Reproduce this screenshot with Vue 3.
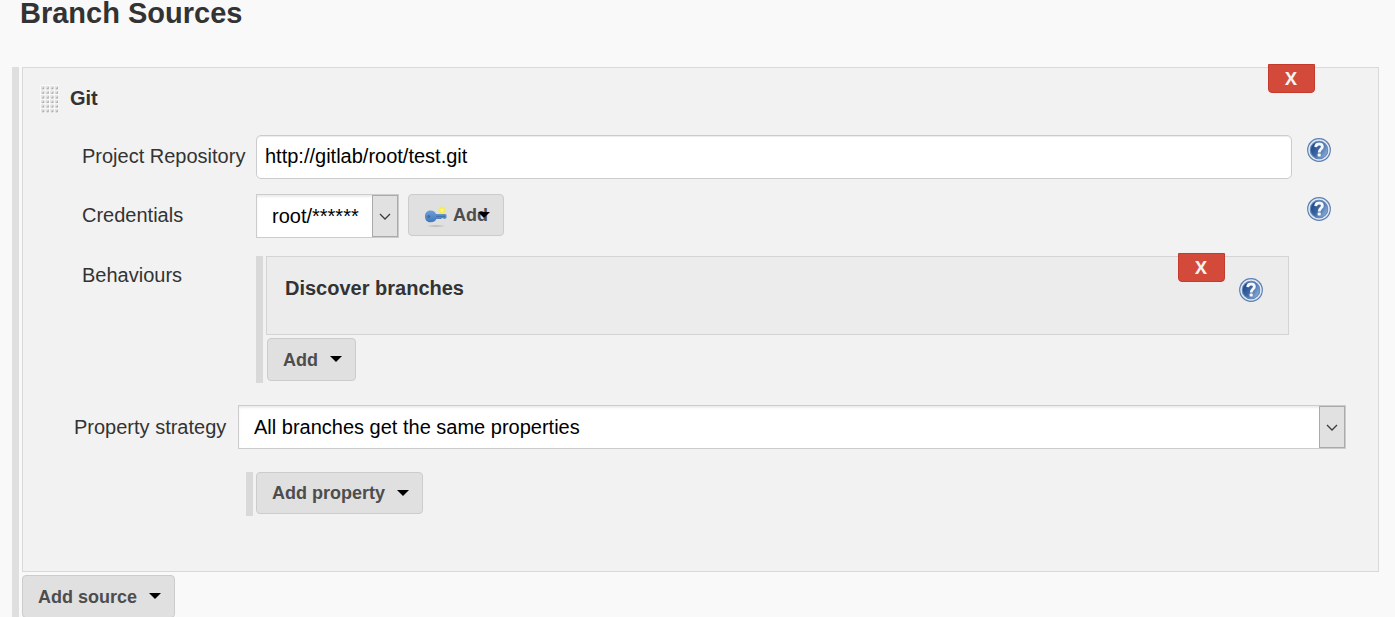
<script setup>
import { ref } from 'vue'

const repository = ref('http://gitlab/root/test.git')
const credential = ref('root/******')
const strategy = ref('All branches get the same properties')

const dots = []
for (let row = 0; row < 6; row++) {
  for (let col = 0; col < 4; col++) {
    dots.push({ x: 1 + col * 4.6, y: 1 + row * 4.6 })
  }
}
</script>

<template>
  <main class="page">
    <svg class="defs" width="0" height="0" aria-hidden="true">
      <defs>
        <linearGradient id="helpFill" x1="0" y1="0.2" x2="1" y2="0.8">
          <stop offset="0" stop-color="#1d4482" />
          <stop offset="0.45" stop-color="#3a65a3" />
          <stop offset="1" stop-color="#93b4dc" />
        </linearGradient>
        <linearGradient id="keyFill" x1="0" y1="0" x2="0" y2="1">
          <stop offset="0" stop-color="#6f9fd6" />
          <stop offset="1" stop-color="#3f78b8" />
        </linearGradient>
        <radialGradient id="glow">
          <stop offset="0" stop-color="#fffbb0" />
          <stop offset="0.5" stop-color="#fbee3c" />
          <stop offset="1" stop-color="#f6e83a" stop-opacity="0.1" />
        </radialGradient>
        <radialGradient id="shade">
          <stop offset="0" stop-color="#b4b4b4" />
          <stop offset="1" stop-color="#e0e0e0" />
        </radialGradient>
        <symbol id="help" viewBox="0 0 24 24">
          <circle cx="12" cy="12" r="11.9" fill="#5a7fb3" />
          <circle cx="12" cy="12" r="10" fill="none" stroke="#dfe8f3" stroke-width="1.5" />
          <circle cx="12" cy="12" r="8.6" fill="url(#helpFill)" stroke="#6b8dbd" stroke-width="0.8" />
          <path d="M8.7 9.1C8.8 6.9 10.3 6 12.1 6C14.1 6 15.4 7.1 15.4 8.7C15.4 11 12.2 11.3 12.2 14.4" fill="none" stroke="#f4f7fb" stroke-width="2.8" />
          <rect x="10.7" y="15.6" width="3" height="3" rx="0.7" fill="#f4f7fb" />
        </symbol>
        <symbol id="caret" viewBox="0 0 12 6">
          <path d="M0 0H12L6 6Z" fill="#000" />
        </symbol>
        <symbol id="chevron" viewBox="0 0 12 7">
          <path d="M1 1L6 6L11 1" fill="none" stroke="#3c3c3c" stroke-width="1.3" />
        </symbol>
      </defs>
    </svg>

    <h1>Branch Sources</h1>

    <section class="sources">
      <div class="panel">
        <button class="remove" type="button" aria-label="Remove Git source">X</button>

        <header class="source-head">
          <svg class="grip" viewBox="0 0 19 28" aria-hidden="true">
            <rect width="19" height="28" fill="#f9f9f9" />
            <g v-for="(dot, i) in dots" :key="i">
              <rect :x="dot.x" :y="dot.y" width="3.4" height="3.4" fill="#e2e2e2" />
              <path :d="`M${dot.x + 3.2} ${dot.y + 0.6}v2.6h-2.6z`" fill="#b0b0b0" />
            </g>
          </svg>
          <h2>Git</h2>
        </header>

        <div class="row">
          <label for="repo">Project Repository</label>
          <input id="repo" v-model="repository" class="text" type="text" />
          <button class="help" type="button" aria-label="Help for Project Repository"><svg><use href="#help" /></svg></button>
        </div>

        <div class="row">
          <label for="cred">Credentials</label>
          <div class="inline">
            <div class="select compact">
              <select id="cred" v-model="credential"><option>root/******</option></select>
              <span class="arrow"><svg><use href="#chevron" /></svg></span>
            </div>
            <button class="btn key-btn" type="button">
              <svg class="key" viewBox="0 0 24 22" aria-hidden="true">
                <ellipse cx="12" cy="20" rx="10" ry="1.6" fill="url(#shade)" />
                <path d="M6.5 4.5C10 4.5 11.6 6.6 12 8H21.5L22.5 9V12L20.5 13L18.5 12L17 13H12.3C11.5 15.3 9.4 16.3 6.5 16.3C2.7 16.3 1 13.8 1 10.5C1 7 3 4.5 6.5 4.5Z" fill="url(#keyFill)" />
                <circle cx="4.8" cy="10.5" r="1.5" fill="#3d6ea8" />
                <path d="M12 10.3H21" stroke="#3f6fa8" stroke-width="1" />
                <circle cx="18" cy="4.2" r="4.2" fill="url(#glow)" />
              </svg>
              <span>Add</span>
              <svg class="caret over"><use href="#caret" /></svg>
            </button>
          </div>
          <button class="help" type="button" aria-label="Help for Credentials"><svg><use href="#help" /></svg></button>
        </div>

        <div class="row behaviours">
          <span class="label">Behaviours</span>
          <div class="stack">
            <div class="trait">
              <button class="remove" type="button" aria-label="Remove Discover branches">X</button>
              <h3>Discover branches</h3>
              <button class="help" type="button" aria-label="Help for Discover branches"><svg><use href="#help" /></svg></button>
            </div>
            <button class="btn" type="button">Add <svg class="caret"><use href="#caret" /></svg></button>
          </div>
        </div>

        <div class="strategy">
          <label for="strategy">Property strategy</label>
          <div class="select">
            <select id="strategy" v-model="strategy"><option>All branches get the same properties</option></select>
            <span class="arrow"><svg><use href="#chevron" /></svg></span>
          </div>
        </div>

        <div class="properties">
          <button class="btn" type="button">Add property <svg class="caret"><use href="#caret" /></svg></button>
        </div>
      </div>

      <button class="btn" type="button">Add source <svg class="caret"><use href="#caret" /></svg></button>
    </section>
  </main>
</template>

<style>
body {
  background: #f9f9f9;
  overflow: hidden;
}
</style>

<style scoped>
* {
  box-sizing: border-box;
}
.page {
  padding: 0 16px 0 12px;
  font-family: "Liberation Sans", Arial, sans-serif;
  font-size: 20px;
  line-height: 24px;
  color: #333;
}
.defs {
  position: absolute;
}
h1,
h2,
h3 {
  margin: 0;
  font-size: 20px;
  line-height: 24px;
}
h1 {
  padding: 0 8px 41px;
  font-size: 29px;
  line-height: 26px;
}
input,
select,
button {
  font-family: inherit;
  font-size: 20px;
  margin: 0;
}
.sources {
  border-left: 7px solid #dfdfdf;
  padding-left: 3px;
}
.panel {
  position: relative;
  margin-bottom: 3px;
  padding: 17px 32px 55px 17px;
  border: 1px solid #d9d9d9;
  background: #f2f2f2;
}
.remove {
  position: absolute;
  top: -4px;
  right: 63px;
  width: 47px;
  height: 29px;
  padding: 0 1px 2px 0;
  border: 1px solid #c43b2b;
  border-radius: 0 0 4px 4px;
  background: #d34a3a;
  color: #f2f2f2;
  font-family: "Open Sans", sans-serif;
  font-size: 18px;
  font-weight: 700;
  line-height: 24px;
}
.source-head {
  display: flex;
  align-items: center;
  gap: 11px;
  margin-bottom: 22px;
}
.source-head h2 {
  padding-bottom: 2px;
}
.grip {
  width: 19px;
  height: 28px;
}
.row {
  display: grid;
  grid-template-columns: 174px 1fr 24px;
  align-items: start;
  margin-bottom: 15px;
  padding: 0 15px 0 42px;
}
.row > label,
.row > .label {
  padding-top: 9px;
}
.row > .help {
  margin-top: 3px;
}
.row .text,
.inline {
  margin-right: 15px;
}
.text {
  height: 44px;
  padding: 0 8px 2px;
  border: 1px solid #ccc;
  border-radius: 5px;
  background: #fff;
  color: #000;
  box-shadow: inset 0 1px 1px #ececec;
}
.inline {
  display: flex;
  align-items: flex-start;
  gap: 9px;
}
.select {
  position: relative;
  display: flex;
}
.select select {
  appearance: none;
  width: 100%;
  height: 44px;
  padding: 0 41px 0 15px;
  border: 1px solid #ccc;
  border-radius: 0;
  background: #fff;
  color: #000;
  box-shadow: inset 0 2px 2px #ececec;
}
.select.compact select {
  padding-right: 39px;
}
.arrow {
  position: absolute;
  top: 1px;
  right: 1px;
  bottom: 1px;
  display: flex;
  align-items: center;
  justify-content: center;
  width: 26px;
  border: 1px solid #aaa;
  background: #e1e1e1;
  pointer-events: none;
}
.arrow svg {
  width: 12px;
  height: 7px;
}
.help {
  display: block;
  width: 24px;
  height: 24px;
  padding: 0;
  border: 0;
  background: none;
}
.help svg {
  display: block;
  width: 24px;
  height: 24px;
}
.btn {
  display: flex;
  align-items: center;
  height: 43px;
  padding: 1px 13px 0 15px;
  border: 1px solid #ccc;
  border-radius: 4px;
  background: #e0e0e0;
  color: #4d4d4d;
  font-size: 18px;
  font-weight: 700;
}
.caret {
  width: 12px;
  height: 6px;
  margin: 0 0 2px 12px;
}
.key-btn {
  position: relative;
  height: 42px;
  gap: 5px;
  padding-right: 15px;
}
.key {
  width: 24px;
  height: 22px;
  margin-top: 2px;
}
.over {
  position: absolute;
  top: 17px;
  right: 13px;
  margin: 0;
}
.behaviours {
  grid-template-columns: 174px 1fr;
  margin-top: 18px;
  margin-bottom: 22px;
  padding-right: 57px;
}
.behaviours .label {
  padding-top: 7px;
}
.stack {
  padding: 0 0 2px 3px;
  border-left: 7px solid #d9d9d9;
}
.stack .btn {
  margin-left: 1px;
}
.trait {
  position: relative;
  display: flex;
  justify-content: space-between;
  align-items: flex-start;
  height: 79px;
  margin-bottom: 3px;
  padding: 19px 25px 0 18px;
  border: 1px solid #d4d4d4;
  background: #ececec;
}
.trait .help {
  margin-top: 2px;
}
.strategy {
  display: flex;
  align-items: center;
  gap: 11px;
  margin-bottom: 23px;
  padding-left: 34px;
}
.strategy label {
  flex: 0 0 153px;
  white-space: nowrap;
}
.strategy .select {
  flex: 1;
}
.properties {
  margin-left: 206px;
  padding: 0 0 2px 3px;
  border-left: 7px solid #d9d9d9;
}
.properties .btn {
  height: 42px;
}
</style>
